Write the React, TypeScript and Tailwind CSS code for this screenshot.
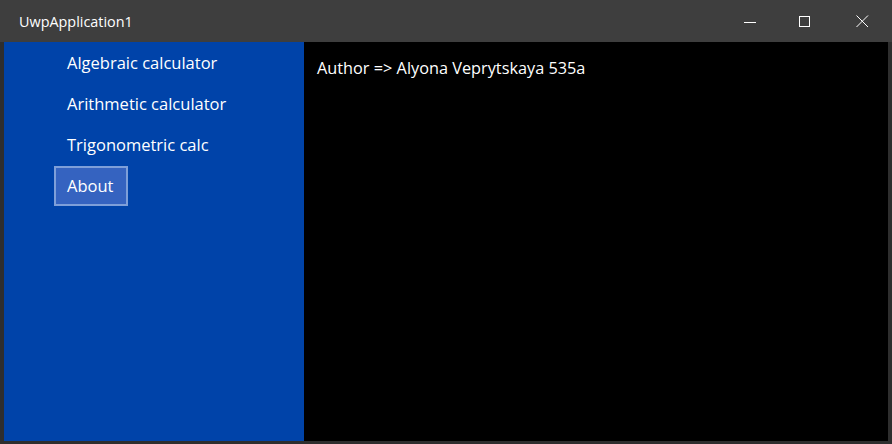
import React from "react";

export default function App() {
  const items = ["Algebraic calculator", "Arithmetic calculator", "Trigonometric calc"];
  return (
    <div
      className="w-[892px] h-[444px] bg-[#3c3c3c] flex flex-col overflow-hidden"
      style={{ fontFamily: '"Open Sans", "Noto Sans", sans-serif' }}
    >
      <div className="h-[42px] flex items-center shrink-0 bg-[#3e3e3e]">
        <div className="pl-[19px] text-[14.4px] text-white flex-1 pt-[2px]">UwpApplication1</div>
        <div className="flex h-full items-center">
          <div className="w-[57px] h-full flex items-center justify-center pt-[2px]">
            <svg width="12" height="12" viewBox="0 0 12 12">
              <path d="M0 6.5 H12" stroke="white" strokeWidth="1" />
            </svg>
          </div>
          <div className="w-[57px] h-full flex items-center justify-center pr-[3px] pt-[1px]">
            <svg width="12" height="12" viewBox="0 0 12 12">
              <rect x="0.5" y="0.5" width="10" height="10" fill="none" stroke="white" strokeWidth="1" />
            </svg>
          </div>
          <div className="w-[57px] h-full flex items-center justify-center pr-[2px] pt-[1px]">
            <svg width="13" height="13" viewBox="0 0 13 13">
              <path d="M0.5 0.5 L12 12 M12 0.5 L0.5 12" stroke="white" strokeWidth="1" />
            </svg>
          </div>
        </div>
      </div>
      <div className="flex flex-1 pl-[4px] pr-[4px] pb-[3px] bg-[#2e2e2e]">
        <div className="w-[300px] bg-[#0043a9] pt-[1px] flex flex-col">
          {items.map((t) => (
            <div key={t} className="h-[41px] flex items-center pl-[63px] text-white text-[16.5px]">
              {t}
            </div>
          ))}
          <div className="ml-[50px] w-[74px] h-[40px] border-2 border-[#7e9fd9] bg-[#3563c0] flex items-center pl-[11px] text-white text-[16.5px]">
            About
          </div>
        </div>
        <div className="flex-1 bg-black pt-[14px] pl-[13px] text-white text-[16.3px]">
          Author =&gt; Alyona Veprytskaya 535a
        </div>
      </div>
    </div>
  );
}
